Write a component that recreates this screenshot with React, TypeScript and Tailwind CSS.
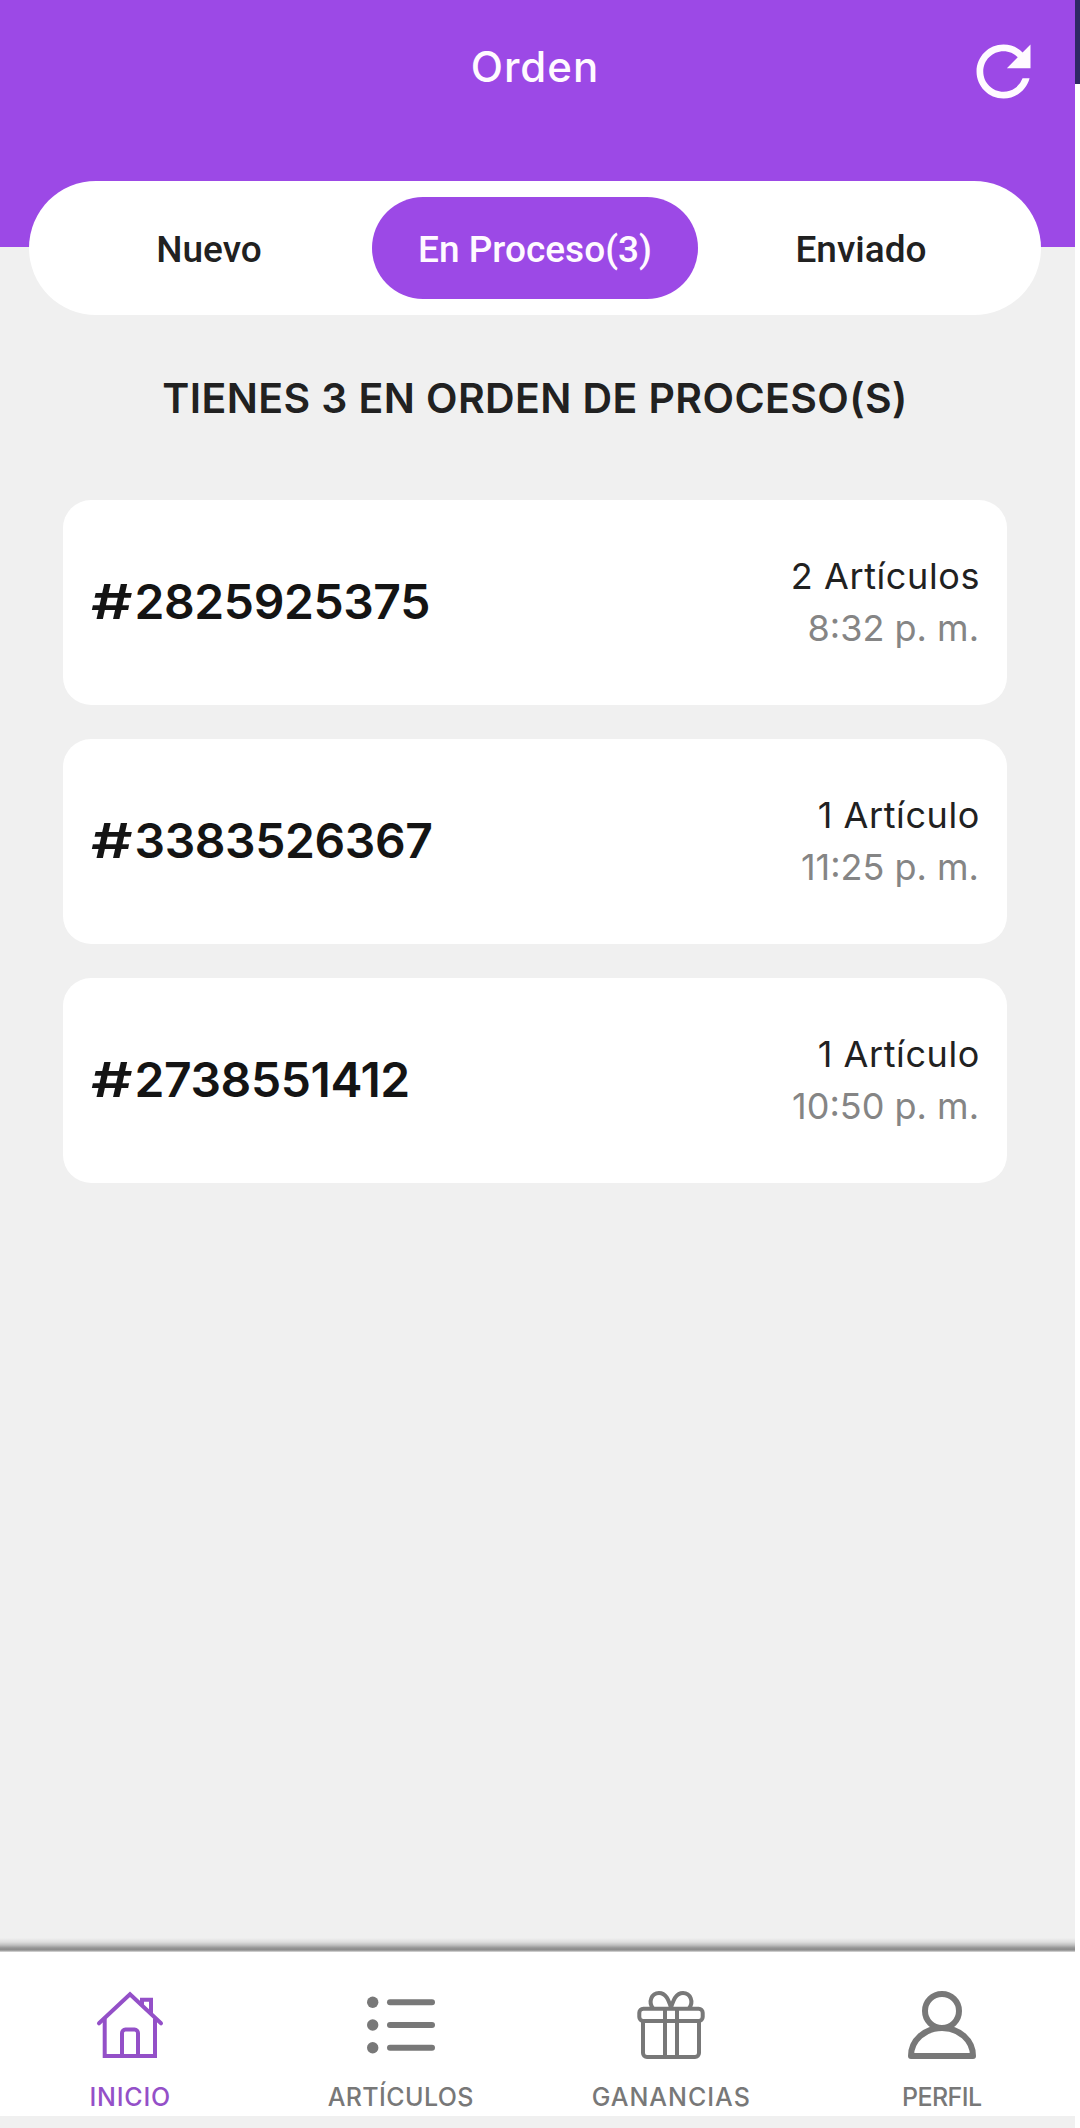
import type { ReactNode } from "react";
import { MdRefresh } from "react-icons/md";

interface Order {
    id: string;
    articulos: string;
    hora: string;
}

const orders: Order[] = [
    { id: "2825925375", articulos: "2 Artículos", hora: "8:32 p. m." },
    { id: "3383526367", articulos: "1 Artículo", hora: "11:25 p. m." },
    { id: "2738551412", articulos: "1 Artículo", hora: "10:50 p. m." },
];

const tabs = [
    { label: "Nuevo", active: false },
    { label: "En Proceso(3)", active: true },
    { label: "Enviado", active: false },
];

export default function App() {
    return (
        <div className="flex h-[2128px] w-[1080px] overflow-hidden bg-white font-['Inter','Open_Sans',sans-serif]">
            <div className="w-[1075px] shrink-0 overflow-hidden bg-[#f0f0f0]">
                <div className="-ml-[5px] flex h-full w-[1082px] flex-col">
                    <div className="w-[1080px]">
                        <Header />
                        <Tabs />
                        <h2 className="mt-[53px] text-center text-[41px] leading-[60px] font-semibold tracking-[0.4px] text-[#212121]">
                            TIENES 3 EN ORDEN DE PROCESO(S)
                        </h2>
                        <div className="mt-[72px] flex flex-col gap-[34px] px-[68px]">
                            {orders.map(order => (
                                <OrderCard key={order.id} order={order} />
                            ))}
                        </div>
                    </div>
                    <BottomNav />
                </div>
            </div>
            {/* Edge of the next screen */}
            <div className="h-[84px] w-[5px] bg-[#2f2864]"></div>
        </div>
    );
}

function Header() {
    return (
        <header className="grid h-[247px] grid-cols-[1fr_auto_1fr] items-start bg-[#9c49e6] pr-[31px] pl-[31px] text-[#fffaff]">
            <h1 className="col-start-2 pt-[37px] text-[42px] leading-[60px] font-medium tracking-[1px]">Orden</h1>
            <button className="mt-[31px] justify-self-end">
                <MdRefresh className="size-[81px]" />
            </button>
        </header>
    );
}

function Tabs() {
    return (
        <div className="mx-[34px] -mt-[66px] grid h-[134px] grid-cols-3 rounded-full bg-white px-[17px] py-4 font-['Roboto',sans-serif] text-[37px] font-medium">
            {tabs.map(tab => (
                <button
                    key={tab.label}
                    className={tab.active ? "rounded-full bg-[#9c49e6] pt-[3px] text-[#fffaff]" : "rounded-full pt-[3px] text-[#212121]"}
                >
                    {tab.label}
                </button>
            ))}
        </div>
    );
}

function OrderCard({ order }: { order: Order }) {
    return (
        <div className="flex h-[205px] items-center justify-between rounded-[28px] bg-white px-7 pb-[2px]">
            <div className="text-[48px] font-semibold tracking-[-0.4px] text-[#141414]">
                <span className="mr-[13px] inline-block origin-left scale-x-[1.35]">#</span>
                {order.id}
            </div>
            <div className="text-right text-[36px] leading-[52px]">
                <p className="-mr-[1px] tracking-[0.6px] text-[#212121]">{order.articulos}</p>
                <p className="text-[#858585]">{order.hora}</p>
            </div>
        </div>
    );
}

function BottomNav() {
    return (
        <nav className="mt-auto mb-3">
            <div className="h-[14px] bg-[linear-gradient(to_bottom,#f0f0f0_0px,#dedede_4px,#c0c0c0_7px,#959595_10px,#8c8c8c_12px,#b5b5b5_13px,#e0e0e0_14px)]"></div>
            <div className="grid h-[164px] grid-cols-4 bg-white pt-[39px] text-[#787878]">
                <NavItem label="INICIO" className="tracking-[0.8px] text-[#9450c8]"><HomeIcon /></NavItem>
                <NavItem label="ARTÍCULOS" className="tracking-[0.4px]"><ListIcon /></NavItem>
                <NavItem label="GANANCIAS" className="tracking-[1px]"><GiftIcon /></NavItem>
                <NavItem label="PERFIL" className="tracking-[-0.6px]"><PersonIcon /></NavItem>
            </div>
        </nav>
    );
}

function NavItem({ label, className, children }: { label: string; className: string; children: ReactNode }) {
    return (
        <a className={`flex flex-col items-center ${className}`}>
            {children}
            <span className="mt-[18px] text-[25px] leading-[40px] font-medium">{label}</span>
        </a>
    );
}

function HomeIcon() {
    return (
        <svg className="size-[68px]" viewBox="0 0 68 68" fill="none" stroke="currentColor" strokeWidth="4">
            <path d="M3 32.3 34 3.3l31 29" strokeLinecap="round" />
            <path d="M8.7 27.5V65H59V27.5" />
            <path d="M26 65V42a3.4 3.4 0 0 1 3.4-3.4h9.2A3.4 3.4 0 0 1 42 42v23" />
            <path d="M46 14V8.8h9V23" />
        </svg>
    );
}

function ListIcon() {
    return (
        <svg className="size-[68px]" viewBox="0 0 68 68" fill="currentColor">
            {[11.3, 34, 56.7].map(y => (
                <g key={y}>
                    <circle cx="5.7" cy={y} r="5.7" />
                    <rect x="20" y={y - 3} width="48" height="6" rx="3" />
                </g>
            ))}
        </svg>
    );
}

function GiftIcon() {
    return (
        <svg className="size-[68px]" viewBox="0 0 68 68" fill="none" stroke="currentColor" strokeWidth="4" strokeLinejoin="round">
            <rect x="2.3" y="17.8" width="63.4" height="12.2" rx="4" />
            <path d="M6 30v32a4 4 0 0 0 4 4h48a4 4 0 0 0 4-4V30M28 18v48M40 18v48" />
            <path d="M16 17.500C11 11 14.500 2 22 2c7 0 9.500 7 12 14.500C36.500 9 39 2 46 2c7.500 0 11 9 6 15.500" />
        </svg>
    );
}

function PersonIcon() {
    return (
        <svg className="size-[68px]" viewBox="0 0 68 68" fill="none" stroke="currentColor" strokeWidth="6" strokeLinejoin="round">
            <circle cx="34" cy="20" r="17" />
            <path d="M3 65C3 49 17 37 34 37s31 12 31 28Z" />
        </svg>
    );
}
